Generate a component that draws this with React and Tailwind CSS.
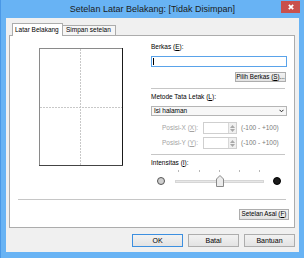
import React from "react";

const font = { fontFamily: '"Liberation Sans", Arial, sans-serif' };

const Btn = ({ children, w = "w-[51px]", h = "h-[13px]", primary, text = "text-[7px]" }) => (
    <div
        className={`${w} ${h} ${text} flex items-center justify-center border ${
            primary ? "border-[#3c8fe0]" : "border-[#adadad]"
        } bg-gradient-to-b from-[#f2f2f2] to-[#e3e3e3] text-black leading-none`}
    >
        {children}
    </div>
);

const Spinner = () => (
    <div className="w-[34px] h-[12px] border border-[#cfcfcf] bg-white flex justify-end">
        <div className="w-[8px] h-full border-l border-[#d8d8d8] bg-[#f0f0f0] flex flex-col items-center justify-around py-[1px]">
            <svg width="5" height="3" viewBox="0 0 5 3">
                <polygon points="2.5,0 5,3 0,3" fill="#a8a8a8" />
            </svg>
            <svg width="5" height="3" viewBox="0 0 5 3">
                <polygon points="0,0 5,0 2.5,3" fill="#a8a8a8" />
            </svg>
        </div>
    </div>
);

export default function App() {
    return (
        <div
            style={font}
            className="w-[304px] h-[258px] bg-[#68b3f4] flex flex-col pl-[5px] pr-[5px] pb-[6px] border-l border-[#4a98e6]"
        >
            {/* Title bar */}
            <div className="h-[18px] relative flex items-center justify-center">
                <span className="text-[9px] text-[#1b1b1b] leading-none">
                    Setelan Latar Belakang: [Tidak Disimpan]
                </span>
                <div className="absolute right-[-1px] top-[1px] w-[19px] h-[12px] bg-[#c9504c] flex items-center justify-center">
                    <svg width="6" height="6" viewBox="0 0 6 6">
                        <path d="M0.8 0.8 L5.2 5.2 M5.2 0.8 L0.8 5.2" stroke="#fff" strokeWidth="1.7" />
                    </svg>
                </div>
            </div>

            {/* Client area */}
            <div className="flex-1 bg-[#f0f0f0] flex flex-col pt-[5px] pl-[3px] pr-[4px]">
                {/* Tabs */}
                <div className="h-[12px] flex items-end pl-[3px] text-[6.5px] text-black">
                    <div className="relative z-10 h-[13px] mb-[-1px] w-[51px] bg-white border border-b-0 border-[#acacac] pl-[2px] flex items-center leading-none">
                        Latar Belakang
                    </div>
                    <div className="h-[10px] w-[53px] bg-[#f6f6f6] border border-l-0 border-b-0 border-[#acacac] pl-[3px] flex items-center leading-none">
                        Simpan setelan
                    </div>
                </div>

                {/* Panel */}
                <div className="h-[193px] bg-white border border-[#acacac] flex flex-col text-[6.5px] text-black leading-[8px]">
                    <div className="flex">
                        {/* Preview */}
                        <div className="w-[141px]">
                            <svg className="ml-[29px] mt-[12px]" width="84" height="118" viewBox="0 0 84 118">
                                <rect x="0" y="0" width="84" height="118" fill="#fff" />
                                <line x1="41.5" y1="1" x2="41.5" y2="117" stroke="#c8c8c8" strokeDasharray="2 1" />
                                <line x1="1" y1="59.5" x2="83" y2="59.5" stroke="#c8c8c8" strokeDasharray="2 1" />
                                <line x1="0.5" y1="0" x2="0.5" y2="118" stroke="#8a8a8a" />
                                <line x1="0" y1="0.5" x2="84" y2="0.5" stroke="#8a8a8a" />
                                <line x1="83.5" y1="0" x2="83.5" y2="118" stroke="#1a1a1a" />
                                <line x1="0" y1="117.5" x2="84" y2="117.5" stroke="#444" />
                            </svg>
                        </div>

                        {/* Settings */}
                        <div className="w-[136px] flex flex-col">
                            <div className="mt-[7px] h-[8px]">
                                Berkas (<u>E</u>):
                            </div>
                            <div className="mt-[5px] h-[11px] border border-[#5aa3ea] bg-white flex items-center pl-[1px]">
                                <div className="w-px h-[7px] bg-black" />
                            </div>
                            <div className="mt-[5px] self-end mr-[1px]">
                                <Btn w="w-[51px]" h="h-[10px]" text="text-[6.3px]">
                                    Pilih Berkas (<u>S</u>)...
                                </Btn>
                            </div>
                            <div className="mt-[6px] h-px w-[134px] bg-[#c6c6c6]" />
                            <div className="mt-[4px] h-[8px]">
                                Metode Tata Letak (<u>L</u>):
                            </div>
                            <div className="mt-[5px] h-[10px] border border-[#b5b5b5] bg-[#f7f7f7] flex items-center justify-between pl-[2px] pr-[2px]">
                                <span>Isi halaman</span>
                                <svg width="5" height="4" viewBox="0 0 5 4">
                                    <polyline points="0.5,0.8 2.5,2.8 4.5,0.8" fill="none" stroke="#222" strokeWidth="1" />
                                </svg>
                            </div>
                            <div className="mt-[6px] h-[12px] flex items-center">
                                <span className="w-[52px] pl-[11px] text-[#a3a3a3]">
                                    Posisi-X (<u>X</u>):
                                </span>
                                <Spinner />
                                <span className="ml-[4px] text-[#7a7a7a]">(-100 - +100)</span>
                            </div>
                            <div className="mt-[3px] h-[12px] flex items-center">
                                <span className="w-[52px] pl-[11px] text-[#a3a3a3]">
                                    Posisi-Y (<u>Y</u>):
                                </span>
                                <Spinner />
                                <span className="ml-[4px] text-[#7a7a7a]">(-100 - +100)</span>
                            </div>
                            <div className="mt-[5px] h-px w-[134px] bg-[#c6c6c6]" />
                            <div className="mt-[4px] h-[8px]">
                                Intensitas (<u>I</u>):
                            </div>

                            {/* Slider */}
                            <div className="mt-[3px] h-[22px] flex items-end pb-[7px]">
                                <div className="ml-[6px] w-[8px] h-[8px] rounded-full bg-[#cfcfcf] border border-[#555]" />
                                <div className="relative ml-[10px] w-[89px] h-[15px] flex items-end">
                                    <div className="absolute left-[3px] top-0 w-px h-[2px] bg-[#b8b8b8]" />
                                    <div className="absolute left-[24px] top-0 w-px h-[2px] bg-[#b8b8b8]" />
                                    <div className="absolute left-[44px] top-0 w-px h-[2px] bg-[#b8b8b8]" />
                                    <div className="absolute left-[64px] top-0 w-px h-[2px] bg-[#b8b8b8]" />
                                    <div className="absolute left-[84px] top-0 w-px h-[2px] bg-[#b8b8b8]" />
                                    <div className="w-full h-[3px] mb-[2px] bg-[#e7e7e7] border border-[#d6d6d6]" />
                                    <svg className="absolute left-[41px] top-[5px]" width="8" height="12" viewBox="0 0 8 12">
                                        <path d="M0.5 4 L4 0.5 L7.5 4 L7.5 11.5 L0.5 11.5 Z" fill="#ececec" stroke="#8a8a8a" />
                                    </svg>
                                </div>
                                <div className="ml-[9px] w-[8px] h-[8px] rounded-full bg-[#1b1b1b] border border-[#000]" />
                            </div>
                        </div>
                    </div>

                    <div className="mt-[7px] ml-[8px] h-px w-[268px] bg-[#c6c6c6]" />
                    <div className="mt-[9px] self-end mr-[5px]">
                        <Btn w="w-[50px]" h="h-[11px]" text="text-[6.3px]">
                            Setelan Asal (<u>F</u>)
                        </Btn>
                    </div>
                </div>

                {/* Dialog buttons */}
                <div className="mt-[6px] flex justify-end gap-[5px]">
                    <Btn primary>OK</Btn>
                    <Btn>Batal</Btn>
                    <Btn>Bantuan</Btn>
                </div>
            </div>
        </div>
    );
}
